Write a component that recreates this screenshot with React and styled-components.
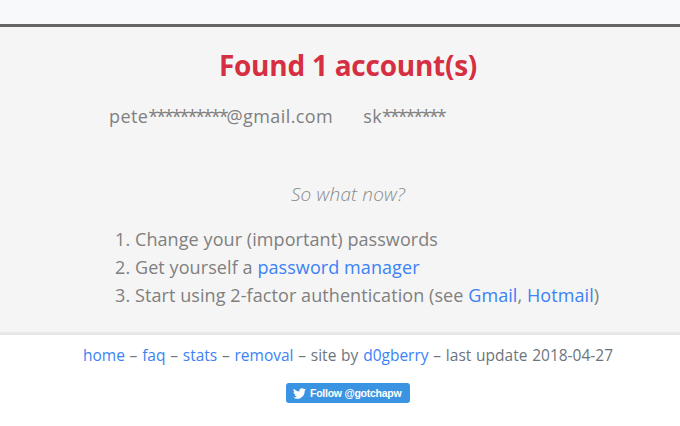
import React from "react";
import styled, { createGlobalStyle } from "styled-components";

const Global = createGlobalStyle`
  html, body { margin: 0; padding: 0; background: #fff; }
  body { font-family: "Open Sans", "Noto Sans", sans-serif; color: #6c757d; }
  a { color: #3b82f6; text-decoration: none; }
`;
const TopBand = styled.div`
  height: 24px;
  background: #f8f9fa;
`;
const Panel = styled.main`
  height: 311px;
  box-sizing: border-box;
  background: #f5f5f5;
  border-top: 3px solid #666;
  border-bottom: 3px solid #e8e8e8;
  padding: 18px 0 0 16px;
`;
const Title = styled.h1`
  margin: 0;
  text-align: center;
  font-size: 28px;
  line-height: 40px;
  font-weight: 700;
  letter-spacing: -0.25px;
  color: #d62f42;
`;
const Accounts = styled.div`
  display: flex;
  gap: 30px;
  padding: 19px 0 0 93px;
  font-size: 18px;
  line-height: 24px;
  letter-spacing: 0.42px;
  color: #808080;
`;
const Stars = styled.span`
  letter-spacing: -2.1px;
`;
const Question = styled.p`
  margin: 54px 0 0;
  text-align: center;
  font-size: 19px;
  line-height: 24px;
  font-style: italic;
  font-weight: 300;
  letter-spacing: 0.15px;
  color: #8a8a8a;
`;
const Steps = styled.ol`
  margin: 19px 0 0;
  padding: 0 0 0 119px;
  font-size: 18px;
  line-height: 28px;
  letter-spacing: 0.08px;
  color: #808080;
`;
const Footer = styled.footer`
  text-align: center;
  padding: 9px 0 0 16px;
  font-size: 15.5px;
  line-height: 22px;
  word-spacing: 0.75px;
  color: #6c757d;
`;
const FollowRow = styled.div`
  display: flex;
  justify-content: center;
  margin-top: 17px;
`;
const Follow = styled.a`
  display: flex;
  align-items: center;
  gap: 4px;
  width: 124px;
  height: 20px;
  box-sizing: border-box;
  padding-left: 7px;
  border-radius: 3px;
  background: #3b94e2;
  color: #fff;
  font-family: "Liberation Sans", Arial, sans-serif;
  font-size: 10.5px;
  font-weight: 700;
  letter-spacing: -0.25px;
  word-spacing: 0;
`;

const Bird = () => (
  <svg width="13" height="13" viewBox="0 0 24 24" fill="#fff" aria-hidden="true">
    <path d="M23.95 4.57a10 10 0 0 1-2.82.77 4.96 4.96 0 0 0 2.16-2.72c-.95.55-2 .96-3.13 1.19a4.92 4.92 0 0 0-8.38 4.48C7.69 8.09 4.07 6.13 1.64 3.16a4.82 4.82 0 0 0-.66 2.47c0 1.71.87 3.21 2.19 4.1a4.9 4.9 0 0 1-2.23-.62v.06a4.92 4.92 0 0 0 3.95 4.83 5 5 0 0 1-2.21.08 4.94 4.94 0 0 0 4.6 3.42A9.87 9.87 0 0 1 0 19.54a14 14 0 0 0 7.56 2.21c9.05 0 14-7.5 14-13.98 0-.21 0-.42-.02-.63a9.94 9.94 0 0 0 2.46-2.55z" />
  </svg>
);

export default function App() {
  return (
    <>
      <Global />
      <TopBand />
      <Panel>
        <Title>Found 1 account(s)</Title>
        <Accounts>
          <span>pete<Stars>**********</Stars>@gmail.com</span>
          <span>sk<Stars>********</Stars></span>
        </Accounts>
        <Question>So what now?</Question>
        <Steps>
          <li>Change your (important) passwords</li>
          <li>Get yourself a <a href="#pm">password manager</a></li>
          <li>Start using 2-factor authentication (see <a href="#g">Gmail</a>, <a href="#h">Hotmail</a>)</li>
        </Steps>
      </Panel>
      <Footer>
        <a href="#home">home</a> – <a href="#faq">faq</a> – <a href="#stats">stats</a> – <a href="#removal">removal</a> – site by <a href="#d">d0gberry</a> – last update 2018-04-27
        <FollowRow>
          <Follow href="#tw"><Bird />Follow @gotchapw</Follow>
        </FollowRow>
      </Footer>
    </>
  );
}
